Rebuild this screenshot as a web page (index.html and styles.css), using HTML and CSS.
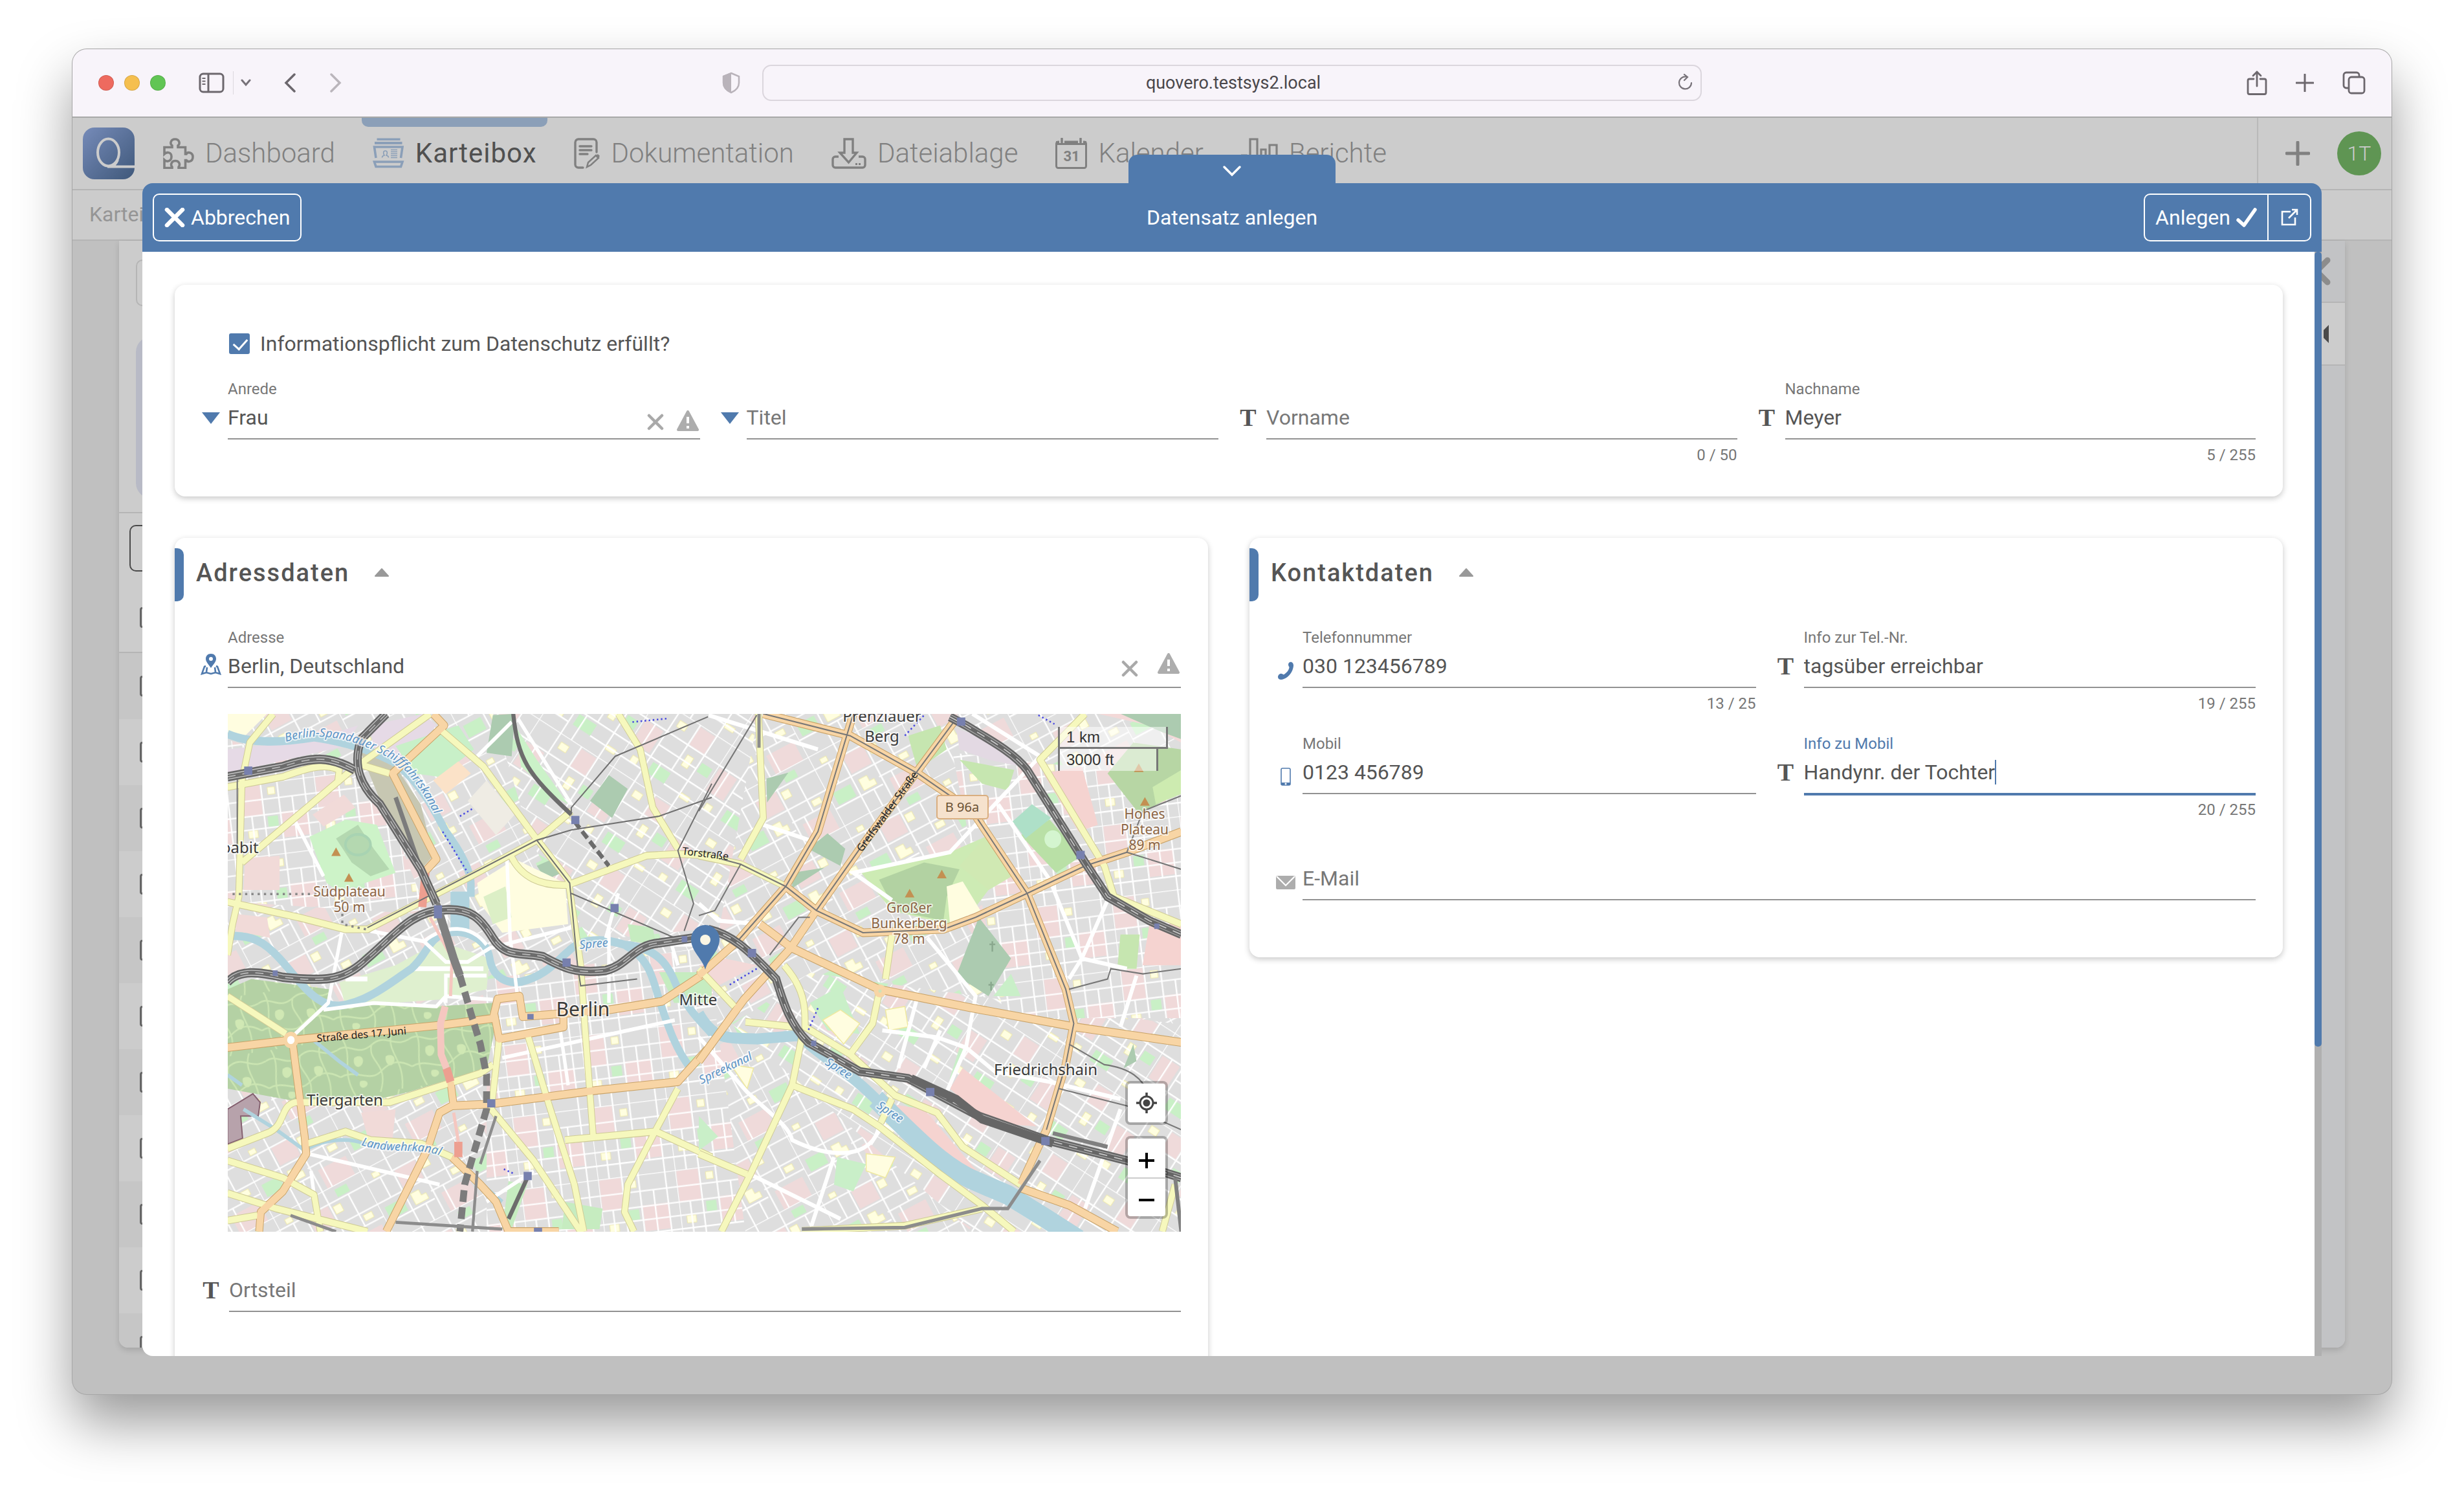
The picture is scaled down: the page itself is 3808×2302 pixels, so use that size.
FILE: index.html
```html
<!DOCTYPE html>
<html lang="de">
<head>
<meta charset="utf-8">
<title>Datensatz anlegen</title>
<link rel="stylesheet" href="styles.css">
</head>
<body>
<div class="window">
  <header class="toolbar">
    <div class="toolbar-side">
      <div class="lights"><span class="light light-red"></span><span class="light light-yellow"></span><span class="light light-green"></span></div>
      <button class="tool tool-sidebar" aria-label="Seitenleiste"><svg width="40" height="32" viewBox="0 0 40 32"><g fill="none" stroke="#6c676d" stroke-width="3"><rect x="2" y="2" width="36" height="28" rx="5"/><path d="M15 2v28"/><path d="M5.500 9h5M5.500 13.500h5M5.500 18h5" stroke-width="2"/></g></svg></button>
      <span class="tool-divider"></span>
      <button class="tool tool-menu" aria-label="Menü"><svg width="16" height="12" viewBox="0 0 16 12"><path d="M2 2l6 7 6-7" fill="none" stroke="#777279" stroke-width="3" stroke-linecap="round"/></svg></button>
      <button class="tool tool-back" aria-label="Zurück"><svg width="20" height="30" viewBox="0 0 20 30"><path d="M17 2L4 15l13 13" fill="none" stroke="#6c676d" stroke-width="3.500" stroke-linecap="round"/></svg></button>
      <button class="tool tool-forward" aria-label="Vor"><svg width="20" height="30" viewBox="0 0 20 30"><path d="M3 2l13 13L3 28" fill="none" stroke="#bab5bb" stroke-width="3.500" stroke-linecap="round"/></svg></button>
    </div>
    <div class="toolbar-center">
      <svg width="28" height="34" viewBox="0 0 28 34"><path d="M14 2l12 5v10c0 7-5 12-12 15C7 29 2 24 2 17V7z" fill="none" stroke="#b9b3ba" stroke-width="2.500"/><path d="M14 1L1 6v11c0 8 6 13 13 16z" fill="#b9b3ba"/></svg>
      <div class="address"><input class="address-input" aria-label="Adresse" value="quovero.testsys2.local"><button class="tool reload" aria-label="Neu laden"><svg width="26" height="28" viewBox="0 0 26 28"><path d="M22 14a9.500 9.500 0 1 1-8-9.500M11 1l5 4-5 5" fill="none" stroke="#777279" stroke-width="2.200" stroke-linecap="round"/></svg></button></div>
    </div>
    <div class="toolbar-side toolbar-end">
      <button class="tool" aria-label="Teilen"><svg width="32" height="40" viewBox="0 0 32 40"><path d="M11 14H4.500a2.500 2.500 0 0 0-2.500 2.500V35a2.500 2.500 0 0 0 2.500 2.500h23A2.500 2.500 0 0 0 30 35V16.500a2.500 2.500 0 0 0-2.500-2.500H21M16 25V3M10 9l6-6 6 6" fill="none" stroke="#6c676d" stroke-width="2.800" stroke-linecap="round" stroke-linejoin="round"/></svg></button>
      <button class="tool" aria-label="Neuer Tab"><svg width="28" height="28" viewBox="0 0 28 28"><path d="M14 1v26M1 14h26" stroke="#6c676d" stroke-width="3" stroke-linecap="round"/></svg></button>
      <button class="tool" aria-label="Tabs"><svg width="36" height="36" viewBox="0 0 36 36"><path d="M9 26H6a4 4 0 0 1-4-4V6a4 4 0 0 1 4-4h16a4 4 0 0 1 4 4v3" fill="none" stroke="#6c676d" stroke-width="2.800"/><rect x="10" y="9" width="24" height="25" rx="4" fill="none" stroke="#6c676d" stroke-width="2.800"/></svg></button>
    </div>
  </header>

  <div class="app">
    <nav class="nav">
      <a class="logo" href="#" aria-label="Start"><svg width="80" height="80" viewBox="0 0 80 80"><defs><linearGradient id="lg" x1="0" y1="0" x2="1" y2="1"><stop offset="0" stop-color="#768bb9"/><stop offset="1" stop-color="#3f587a"/></linearGradient></defs><rect width="80" height="80" rx="18" fill="url(#lg)"/><ellipse cx="39.500" cy="38.500" rx="16.500" ry="21" fill="none" stroke="#ccc" stroke-width="4"/><path d="M38 60.500h42M46 60c3-2 6-5 8-10" fill="none" stroke="#ccc" stroke-width="4"/></svg></a>
      <div class="nav-items">
        <a class="nav-item" href="#"><svg width="48" height="48" viewBox="0 0 48 48"><path d="M2 14.500h12V12C10 9 12 2 18.500 2S27 9 23 12v2.500h11.500V25H36c2-4 10-3 10 4.500S38 38 36 34.500h-1.500V46.500H24V45c3-4 1-9.500-5-9.500s-8 6-5 9.500v1.500H2V34c4 4 11 2 11-5s-7-8-11-4z" fill="none" stroke="#808080" stroke-width="3.600"/></svg><span>Dashboard</span></a>
        <a class="nav-item active" href="#"><svg width="49" height="48" viewBox="0 0 49 48"><path d="M6.500 .5h36v3.500h-36zM3 6h42.500v4H3z" fill="#8b9fb8"/><path d="M5 31L2.500 14h43.500L43.500 31M2.500 37h43.500l-2.500 7.500H5z" fill="none" stroke="#8b9fb8" stroke-width="3.600"/><path d="M14.500 30.500c0-2 1-3 3.500-3.500-2-3-2-7 1.500-7s3.500 4 1.500 7c2.500.5 3.500 1.500 3.500 3.500" fill="none" stroke="#8b9fb8" stroke-width="1.600"/><path d="M28 18.500h10M28 21.500h10M28 24.500h10M28 27.500h10M28 30.500h10" stroke="#8b9fb8" stroke-width="1.500"/></svg><span>Karteibox</span></a>
        <a class="nav-item" href="#"><svg width="40" height="48" viewBox="0 0 40 48"><path d="M14 46H7a5 5 0 0 1-5-5V7a5 5 0 0 1 5-5h23a5 5 0 0 1 5 5v15M9 13h18M9 19h18M9 25h12" fill="none" stroke="#808080" stroke-width="3.400" stroke-linecap="round"/><path d="M20 45l2-7 12-11 4 4-12 11z" fill="none" stroke="#808080" stroke-width="2.500"/><path d="M33 28l4-3 3 3-3 4z" fill="#808080"/></svg><span>Dokumentation</span></a>
        <a class="nav-item" href="#"><svg width="54" height="48" viewBox="0 0 54 48"><path d="M20 2h13v21h6L26.500 38 13 23h7zM11 29H6a4 4 0 0 0-4 4v9a4 4 0 0 0 4 4h42a4 4 0 0 0 4-4v-9a4 4 0 0 0-4-4h-6" fill="none" stroke="#808080" stroke-width="3.400"/><path d="M37 39h3v3h-3zM42 39h3v3h-3z" fill="#808080"/></svg><span>Dateiablage</span></a>
        <a class="nav-item" href="#"><svg width="49" height="48" viewBox="0 0 49 48"><rect x="1.500" y="6" width="46" height="40.500" rx="3" fill="none" stroke="#808080" stroke-width="3"/><path d="M1 5h47v6H1z" fill="#808080"/><path d="M10 0v8M39 0v8" stroke="#ccc" stroke-width="8"/><path d="M10 1v6M39 1v6" stroke="#808080" stroke-width="3.500" stroke-linecap="round"/><text x="25" y="36" text-anchor="middle" class="cal-day">31</text></svg><span>Kalender</span></a>
        <a class="nav-item" href="#"><svg width="57" height="48" viewBox="0 0 57 48"><path d="M0 27h8v19h6V2h11v44h6V18h7v28h6V11h11v35" fill="none" stroke="#808080" stroke-width="3.200"/></svg><span>Berichte</span></a>
      </div>
      <div class="nav-end">
        <button class="tool" aria-label="Neu"><svg width="38" height="38" viewBox="0 0 38 38"><path d="M19 2v34M2 19h34" stroke="#808080" stroke-width="5" stroke-linecap="round"/></svg></button>
        <span class="avatar">1T</span>
      </div>
    </nav>
    <div class="crumbs">Karteibox</div>
    <div class="panel">
      <div class="panel-list">
        <div class="panel-filter"><div class="ghost-input"></div><div class="ghost-card"></div></div>
        <div class="panel-tools"><div class="ghost-button"></div></div>
        <div class="row row-head"><i></i></div>
        <div class="row"><i></i></div><div class="row"><i></i></div><div class="row"><i></i></div><div class="row"><i></i></div><div class="row"><i></i></div><div class="row"><i></i></div><div class="row"><i></i></div><div class="row"><i></i></div><div class="row"><i></i></div><div class="row"><i></i></div><div class="row"><i></i></div>
      </div>
      <div class="panel-aside">
        <div class="aside-close"><svg width="44" height="44" viewBox="0 0 44 44"><path d="M5 5l34 34M39 5L5 39" stroke="#8c8c8c" stroke-width="9" stroke-linecap="round"/></svg></div>
        <div class="aside-tab"><svg width="10" height="28" viewBox="0 0 10 28"><path d="M10 0v28L2 20V8z" fill="#4a4a4a"/></svg></div>
      </div>
    </div>

    <section class="modal" aria-label="Datensatz anlegen">
      <button class="modal-tab" aria-label="Minimieren"><svg width="30" height="18" viewBox="0 0 30 18"><path d="M3 3l12 12L27 3" fill="none" stroke="#fff" stroke-width="3.500" stroke-linecap="round"/></svg></button>
      <header class="modal-head">
        <div class="modal-left"><button class="btn"><svg width="32" height="30" viewBox="0 0 32 30"><path d="M4 3l24 24M28 3L4 27" stroke="#fff" stroke-width="6.500" stroke-linecap="round"/></svg>Abbrechen</button></div>
        <h1 class="modal-title">Datensatz anlegen</h1>
        <div class="modal-right"><div class="btn-group"><button class="btn">Anlegen<svg width="32" height="30" viewBox="0 0 32 30"><path d="M3 19l9 8L29 3" fill="none" stroke="#fff" stroke-width="5.500" stroke-linecap="round" stroke-linejoin="round"/></svg></button><button class="btn btn-open" aria-label="In neuem Fenster"><svg width="28" height="28" viewBox="0 0 28 28"><path d="M16 5H3v20h20V14M18 2h8v8M26 2L13 15" fill="none" stroke="#fff" stroke-width="2.600"/></svg></button></div></div>
      </header>
      <div class="modal-main">
        <form class="form">
          <section class="card card-plain">
            <label class="check"><input type="checkbox" checked>Informationspflicht zum Datenschutz erfüllt?</label>
            <div class="grid four">
              <div class="field">
                <svg class="mark arrow" width="28" height="18" viewBox="0 0 28 18"><path d="M0 0h28L14 18z" fill="#507aad"/></svg>
                <label for="anrede">Anrede</label>
                <div class="control"><select id="anrede"><option>Frau</option><option>Herr</option></select>
                  <button type="button" class="tool clear" aria-label="Leeren"><svg width="26" height="26" viewBox="0 0 26 26"><path d="M3 3l20 20M23 3L3 23" stroke="#a9a9a9" stroke-width="4.500" stroke-linecap="round"/></svg></button>
                  <svg width="34" height="32" viewBox="0 0 34 32"><path d="M17 2l15 28H2z" fill="#adadad" stroke="#adadad" stroke-width="4" stroke-linejoin="round"/><path d="M17 10v10M17 24v4" stroke="#fff" stroke-width="4"/></svg></div>
              </div>
              <div class="field empty">
                <svg class="mark arrow" width="28" height="18" viewBox="0 0 28 18"><path d="M0 0h28L14 18z" fill="#507aad"/></svg>
                <label for="titel">Titel</label>
                <div class="control"><select id="titel"><option></option></select></div>
              </div>
              <div class="field text empty"><span class="mark letter">T</span><label for="vorname">Vorname</label><div class="control"><input id="vorname"></div><span class="count">0 / 50</span></div>
              <div class="field text"><span class="mark letter">T</span><label for="nachname">Nachname</label><div class="control"><input id="nachname" value="Meyer"></div><span class="count">5 / 255</span></div>
            </div>
          </section>

          <div class="columns">
            <section class="card">
              <h2 class="card-head">Adressdaten<svg width="24" height="14" viewBox="0 0 24 14"><path d="M12 1l10 11H2z" fill="#999" stroke="#999" stroke-width="2" stroke-linejoin="round"/></svg></h2>
              <div class="grid">
                <div class="field">
                  <svg class="mark" width="32" height="34" viewBox="0 0 32 34"><path d="M16 1c-5 0-8 3.500-8 8 0 5 5 9 8 14 3-5 8-9 8-14 0-4.500-3-8-8-8zm0 5a3 3 0 1 1 0 6 3 3 0 0 1 0-6z" fill="#507aad" fill-rule="evenodd"/><path d="M8 20l-2 1-4 11 7-2 7 2 7-2 7 2-4-11-2-1M10 22l-1 7M22 22l1 7" fill="none" stroke="#507aad" stroke-width="2.600"/></svg>
                  <label for="adresse">Adresse</label>
                  <div class="control roomy"><input id="adresse" value="Berlin, Deutschland">
                    <button type="button" class="tool clear" aria-label="Leeren"><svg width="26" height="26" viewBox="0 0 26 26"><path d="M3 3l20 20M23 3L3 23" stroke="#a9a9a9" stroke-width="4.500" stroke-linecap="round"/></svg></button>
                    <svg width="34" height="32" viewBox="0 0 34 32"><path d="M17 2l15 28H2z" fill="#adadad" stroke="#adadad" stroke-width="4" stroke-linejoin="round"/><path d="M17 10v10M17 24v4" stroke="#fff" stroke-width="4"/></svg></div>
                </div>
              </div>
              <div class="map">
                <svg class="map-art" viewBox="0 0 1473 800" preserveAspectRatio="xMidYMid slice">
                  <defs>
                    <pattern id="pa" width="190" height="150" patternUnits="userSpaceOnUse" patternTransform="rotate(-28) scale(.8)">
                      <rect width="190" height="150" fill="#dedede"/><path d="M60 30h44v38H60zM120 110h60v40h-60z" fill="#efdada"/><path d="M10 84h38v26H10zM130 8h26v16h-26z" fill="#c9f0c6"/><path d="M66 84h18v12h10v12H66zM112 36h16v16h-16zM18 14h14v10H18zM156 78h18v12h-18z" fill="#fffee0" stroke="#efe9a0"/>
                      <path d="M0 0h190M0 28h190M0 72h190M0 114h104M104 98h86M0 0v150M56 0v150M108 0v150M150 28v70M30 28v44M84 114v36M130 98v52" fill="none" stroke="#fff" stroke-width="3"/></pattern>
                    <pattern id="pb" width="170" height="160" patternUnits="userSpaceOnUse" patternTransform="rotate(33) scale(.8)">
                      <rect width="170" height="160" fill="#dedede"/><path d="M4 50h40v50H4zM100 4h34v40h-34z" fill="#efdada"/><path d="M60 110h40v24H60zM140 60h24v20h-24z" fill="#c9f0c6"/><path d="M60 14h18v14H60zM108 62h14v24h-14zM20 120h14v14H20zM138 130h20v10h-20z" fill="#fffee0" stroke="#efe9a0"/>
                      <path d="M0 0h170M0 46h170M0 104h170M50 76h86M0 134h50M100 134h70M0 0v160M50 0v160M98 0v104M136 0v160M24 46v58M74 104v56" fill="none" stroke="#fff" stroke-width="3"/></pattern>
                    <pattern id="pc" width="150" height="140" patternUnits="userSpaceOnUse" patternTransform="rotate(-7) scale(.8)">
                      <rect width="150" height="140" fill="#dedede"/><path d="M2 2h42v60H2zM80 60h50v50H80z" fill="#f0d9d9"/><path d="M52 66h20v20H52z" fill="#c9f0c6"/><path d="M58 10h14v14H58zM12 90h18v14H12z" fill="#fffee0" stroke="#efe9a0"/>
                      <path d="M0 0h150M0 32h150M0 62h150M0 88h150M0 114h150M0 0v140M46 0v140M78 0v140M104 32v82M130 0v140M22 62v78" fill="none" stroke="#fff" stroke-width="3"/></pattern>
                    <pattern id="wood" width="230" height="170" patternUnits="userSpaceOnUse" patternTransform="rotate(-8)"><rect width="230" height="170" fill="#b4d1a4"/><path d="M0 30C40 10 60 60 110 30S180 50 230 30M20 0C50 60 0 90 40 170M110 30C90 80 160 90 120 170M0 110C50 90 90 140 130 110S200 90 230 110M180 0C150 60 210 80 190 170" fill="none" stroke="#cbe5b2" stroke-width="5"/><path d="M50 60c20-10 34 4 24 20s-34 6-24-20zM150 70c14-8 36 2 24 20s-30 0-24-20zM60 130c20-4 30 10 16 18s-24-6-16-18z" fill="#d0e8b4"/></pattern>
                    <g id="yl"><path d="M170 26L95 110 70 220 60 560 40 640 24 730M24 240L200 210C290 180 340 170 380 190L375 230M670 26L420 190 70 460M24 575L250 620 400 655 470 655 800 500 1010 395 1120 310M700 70L840 180 1000 380 1110 510 1150 760 1165 960 1190 1260M1270 26L1340 130 1380 300 1460 420M1568 440L1460 435 1360 440 1110 525C1020 530 960 500 930 445M450 175L540 200M24 850L210 960M24 1330L200 1380 300 1430 320 1537M24 1425L180 1470 470 1537M24 1295L150 1250C210 1230 190 1170 240 1160L540 1160 830 1075 870 1050M890 975L865 1180 1000 1330 1150 1537M980 960L1050 1170 1130 1400 1160 1537M1100 1270L1390 1245 1568 1320M1460 1120L1390 1240 1300 1400 1290 1480 1320 1537M280 1280L400 1245 480 1270 640 1280 740 1320M24 1505L120 1490"/></g>
                    <g id="yr"><path d="M185 26L200 330 130 450M0 440L130 465 270 530M1200 26L1060 160 1260 470 1290 560 1499 640M600 670L580 800M560 840L540 930 470 1020M265 760C330 830 330 880 330 940L470 1020 610 1140 740 1190 820 1290 1000 1400M145 925L300 940M320 970L290 1110 160 1370 70 1537M290 1110L480 1180 560 1230 750 1370 880 1460 980 1537M600 1150L565 1220M0 1310L150 1370M320 1535L640 1520 880 1470M0 770L110 880M1440 1537L1480 1400"/></g>
                    <g id="ol"><path d="M24 1000L210 980 700 935 870 915 885 858 955 850 965 910 1240 890 1410 865 1568 770M232 990L270 1260 275 1310 200 1420 130 1480 125 1537M680 26L715 60 550 200 690 450 650 490M875 905L890 975 1095 940 1095 905M530 1537L660 1300 700 1190 740 1170 860 1165 1200 1125 1460 1100 1568 990M735 1100L745 1170M740 1320L830 1400 880 1450 920 1537 1080 1537"/></g>
                    <g id="or"><path d="M200 26L470 90 680 200 850 310 1020 550 1140 830 1165 930 1140 1050 1080 1240 1000 1400M480 26L370 370 270 530 120 690 0 790M800 40L500 420 365 600 285 710 140 860 0 1040M270 530L365 600 510 665 760 655 860 620 1020 550 1200 470 1330 430 1499 370M190 640L290 710 560 830 850 885 1170 940 1499 985M1000 1410L1150 1460 1300 1537"/></g>
                    <g id="rl"><path d="M24 810C60 770 130 780 200 795 350 810 400 800 470 740 560 670 610 600 720 598 800 595 830 620 870 680 910 740 960 720 1030 735 1100 770 1140 785 1230 775 1300 760 1320 700 1400 695L1510 680M530 26L450 100C420 180 450 240 510 290L640 480 690 580M24 210L200 180C300 150 350 150 430 190"/></g>
                    <g id="rr"><path d="M780 35L830 60C900 100 980 140 1020 190L1200 460 1270 560 1400 630 1499 670M30 655C100 670 150 710 240 800 260 860 280 930 340 985L500 1070 650 1090 870 1200 1080 1270 1330 1330 1499 1380"/></g>
                    <path id="kanal" d="M90 43C160 20 220 52 262 75 300 112 318 150 336 190"/>
                    <path id="landwehr" d="M206 666C260 684 300 664 345 690"/>
                  </defs>
                  <rect width="1473" height="800" fill="url(#pa)"/>
                  <path d="M410 0H820L760 330 560 350 470 200zM900 400L1473 480V800H1150L780 480z" fill="url(#pb)"/>
                  <path d="M400 410L740 360 800 800H400zM0 40L230 110 310 310 0 290zM1120 60L1473 100V470H1200z" fill="url(#pc)"/>
                  <g transform="matrix(.4847 0 0 .5294 -12 -14)">
                    <path d="M24 26H150L80 90 24 80z" fill="#fffde0"/>
                    <path d="M480 60L650 26 690 60 580 170 490 130zM24 130L300 100 440 60 400 120 24 200z" fill="#e6dae6"/>
                    <path d="M80 450L190 440V540H75zM295 320L395 262 432 300 330 355zM50 610L150 620 160 680 50 660zM450 1190L560 1180 550 1270 470 1260z" fill="#f1dad8"/>
                    <path d="M285 385L400 335 500 350 560 490 380 545 340 520z" fill="#cdf3c8"/><path d="M370 390L440 350 490 420 540 480 480 500 420 460z" fill="#b4d8b0"/><ellipse cx="440" cy="408" rx="40" ry="30" fill="none" stroke="#a8d3b2" stroke-width="8"/>
                    <path d="M560 120L760 60 810 130 700 210 620 200z" fill="#c8f0c8"/><path d="M680 220L760 165 800 200 720 260z" fill="#fbe2c8"/><path d="M790 280L850 220 940 320 880 380z" fill="#efece4"/>
                    <path d="M870 30L940 26 930 150 850 140zM1180 280L1240 205 1300 245 1250 330z M1010 470l50-20 30 40-50 20z" fill="#accbb0"/><path d="M940 60L1010 160 1110 290 1070 270 960 180z" fill="#cbf2c8"/>
                    <path d="M820 520L940 450 1100 520 1110 640 900 665 830 580z" fill="#fffde0"/><path d="M840 560l70-30 20 90-60 20z" fill="#dcefc6"/>
                    <path d="M440 120L560 180 640 290 680 440 640 480 520 300z" fill="#c7c7b2"/>
                    <path d="M24 830L100 800 350 830 340 890 490 870 690 880 870 870 885 910 850 1060 600 1130 440 1165 260 1160 24 1120z" fill="url(#wood)"/>
                    <path d="M380 810L560 760 700 690 860 740 850 830 700 860 400 880z" fill="#dff0cf"/>
                    <path d="M600 770H840M400 800H470" stroke="#fff" stroke-width="14"/>
                    <path d="M60 1160L105 1135 128 1160 122 1200 66 1200 72 1265 24 1282V1180z" fill="#b7a2ab" stroke="#84606f" stroke-width="4"/>
                    <path d="M1300 640l80 10 10 50-80-10zM1400 780h168v90h-120zM1100 1450l120 20-10 60h-120zM920 1390l60 10-50 130h-30z" fill="#c6ecc0"/>
                    <g fill="none" stroke="#b0d3de" stroke-width="24"><path d="M24 675C100 670 140 690 190 740 250 800 300 880 380 878 470 870 560 800 610 770 660 730 660 690 710 668 780 650 850 680 860 740 870 800 920 815 960 808 1040 790 1070 750 1110 720 1150 680 1220 680 1290 700 1370 740 1380 800 1400 860 1430 940 1450 1000 1500 1060M1290 700C1400 710 1430 760 1460 830 1500 900 1540 930 1568 960"/><path d="M24 85C100 115 200 110 300 95 420 110 500 140 560 170 640 230 680 300 720 370 770 430 800 490 800 520V560" /><path d="M765 545V660" stroke-width="60"/><path d="M75 1180L180 1240 270 1300C320 1270 400 1260 460 1280 560 1300 700 1290 760 1340L900 1450M24 1080L70 1110M300 980L380 1040 440 1080" stroke-width="11"/></g>
                    <g fill="none" stroke="#fff" stroke-width="11"><path d="M390 655L345 870 240 960M330 890L490 870 690 880 720 850 870 860M480 660L650 690 720 750 790 750 860 710 1120 650M650 690C720 640 800 640 850 700M915 450L925 680 950 860M240 340L330 500M930 50L820 150M950 40L1120 290M720 640V590M1568 700L1440 700 1460 760M720 870V790H850M280 1310L700 1400M290 1360L310 1500M850 1450L1000 1360M1085 950L1110 1110M900 1030L1450 920M1240 640L1240 870M1270 550L1230 680"/></g>
                    <g fill="none" stroke-linejoin="round"><use href="#yl" stroke="#cfcb96" stroke-width="22"/><use href="#ol" stroke="#c9a368" stroke-width="25"/><use href="#yl" stroke="#f6f8bd" stroke-width="18"/><use href="#ol" stroke="#f8d5a5" stroke-width="21"/></g>
                    <circle cx="226" cy="978" r="18" fill="#fff" stroke="#f8d5a5" stroke-width="12"/>
                    <path d="M655 490L645 590M722 1060L735 1100M760 1275V1320" stroke="#ed9f90" stroke-width="26"/><path d="M718 880L703 930 705 1020 722 1060" fill="none" stroke="#f5c7c0" stroke-width="22"/><path d="M670 620L740 740 735 850M745 1190L760 1275" fill="none" stroke="#f5c7c0" stroke-width="10"/>
                    <g fill="none" stroke="#707070" stroke-width="4"><path d="M470 650L1010 395 1120 365 1400 325 1568 270M1120 320V300L1260 150 1568 30M1010 395L1115 520 1140 760 1150 820 1330 800M1120 550L1450 680M1568 230L1460 425 1510 580 1480 660M55 420V200"/></g>
                    <g fill="none"><path d="M560 270L640 480 700 590" stroke="#7c7c7c" stroke-width="14"/><use href="#rl" stroke="#666" stroke-width="27"/><use href="#rl" stroke="#c4c4c4" stroke-width="17"/><use href="#rl" stroke="#6c6c6c" stroke-width="12"/><use href="#rl" stroke="#bbb" stroke-width="3" stroke-dasharray="26 22"/>
                    <path d="M935 26C950 160 980 200 1120 320M920 1500L980 1380" stroke="#6c6c6c" stroke-width="13"/><path d="M1130 340L1240 470" stroke="#6c6c6c" stroke-width="13" stroke-dasharray="26 12"/><path d="M700 610L745 740 765 790" stroke="#808080" stroke-width="26"/><path d="M765 790L800 900 830 990 850 1080 850 1180 780 1400 765 1537" stroke="#7c7c7c" stroke-width="22" stroke-dasharray="34 16"/><path d="M820 1360L805 1537M560 1510L900 1530M225 1490L370 1537M880 1200L830 1340" stroke="#8c8c8c" stroke-width="9"/></g>
                    <path d="M77 180h26v24H77zM1120 324h26v24h-26zM682 585h26v38h-26zM168 775h16v16h-16zM1092 740h26v24h-26zM1245 581h26v24h-26zM980 902h20v16h-20zM852 1151h26v24h-26zM968 1363h26v24h-26zM1001 1526h26v12h-26zM1472 675h18v18h-18z" fill="#7780ae"/>
                    <path d="M710 370L790 490M765 325l40-22M1315 50l110-10M905 1355l34 14" stroke="#4a4ae0" stroke-width="5" stroke-dasharray="5 8"/>
                    <path d="M40 552H300L390 560V640L470 656" fill="none" stroke="#888" stroke-width="7" stroke-dasharray="7 13"/>
                    <path d="M355 441l15-25 15 25zM396 516l15-25 15 25z" fill="#c39052"/>
                  </g>
                  <g transform="matrix(.4974 0 0 .5294 728 -14)">
                    <path d="M1240 26H1499V110L1400 60zM0 760L80 740 180 760 60 820z" fill="#f3d9d8"/><path d="M1310 26H1499V100L1440 80z" fill="#accbb0"/>
                    <path d="M1350 110L1499 130V250L1370 320 1270 200z" fill="#b7d6a4"/><path d="M1410 240L1499 190V260L1420 290z" fill="#cdebb0"/>
                    <path d="M1000 380L1090 335 1190 440 1110 490z" fill="#b9e0a6"/><circle cx="1100" cy="392" r="26" fill="#d4f5cf"/><path d="M975 340l60-50 60 40-80 60z" fill="#aee0c8"/>
                    <path d="M1070 200l120-20 50 170-60 20zM1400 640h99v120h-120zM820 1060L1050 1230 900 1220 780 1120zM560 1160L700 1180 900 1400 700 1330z" fill="#f5d3d0"/>
                    <path d="M650 90L750 60 770 130 680 190zM810 160L980 190 960 250 880 230zM1310 670h60l-10 100h-60z" fill="#c6e6b0"/><path d="M800 70L940 110 1000 180 900 160 810 130z" fill="#e3d9e3"/>
                    <path d="M505 490L780 430 890 385 990 490 900 540 860 590 770 640 600 600z" fill="#cdebb4"/><path d="M560 510L700 460 810 480 770 560 760 630 610 600z" fill="#b2d2a2"/><path d="M890 385L990 490 900 540 810 470z" fill="#d0e9b3"/><path d="M770 530L820 515 875 600 780 635z" fill="#fffde0"/>
                    <path d="M870 620L970 740 900 850 800 790zM340 420L400 375 455 420 440 470zM210 215L278 198 212 285zM290 490l100-15-100 60zM1350 990l10 50-40 20z" fill="#accbb0"/>
                    <path d="M970 785L1000 850H915zM345 870L440 820 500 960 400 950zM0 1200L60 1260 0 1300zM430 1320L520 1340 480 1420 420 1400zM780 1090L810 1000 830 1010 780 1120z" fill="#c9efc8"/>
                    <path d="M385 920L440 890 500 930 450 990zM580 890L640 880 650 940 590 950zM520 1310l90 10-30 60-60-20zM100 1050l70 10-20 60z" fill="#fffde0" stroke="#efe9a0" stroke-width="3"/>
                    <path d="M0 900C50 985 100 970 180 975L310 965C400 1040 480 1080 560 1160" fill="none" stroke="#b0d3de" stroke-width="32"/><path d="M550 1150C680 1270 760 1350 860 1390L960 1430 1080 1500 1180 1560" fill="none" stroke="#b0d3de" stroke-width="58"/>
                    <g fill="none" stroke="#fff" stroke-width="12"><path d="M850 26L1060 150 920 290 780 430 480 490 600 570M710 680L860 850 830 1000 770 1130M930 290L1090 510 1190 740 1330 770M1270 570L1190 740 1150 800M0 970L150 1130C230 1200 280 1230 290 1270 420 1330 540 1320 560 1230M30 30L370 130M680 850L620 1060M570 950L740 970 830 1000 920 1070 1090 1100 1310 1150M1310 1180L1200 1470M1360 790L1310 940M160 1370L440 1500M420 1320L350 1520M0 580L60 630 190 640M750 950L700 1060M200 350L360 400"/></g>
                    <g fill="none" stroke-linejoin="round"><use href="#yr" stroke="#cfcb96" stroke-width="22"/><use href="#or" stroke="#c9a368" stroke-width="25"/><use href="#yr" stroke="#f6f8bd" stroke-width="18"/><use href="#or" stroke="#f8d5a5" stroke-width="21"/></g>
                    <circle cx="563" cy="835" r="12" fill="#cfe2b8" stroke="#f8d5a5" stroke-width="14"/>
                    <g fill="none" stroke="#777" stroke-width="4"><path d="M200 26L470 90 680 200 850 310 1020 550 1140 830 1165 930 1140 1050 1080 1240M480 26L370 370 270 530 120 690M800 40L500 420 365 600M270 530L365 600 510 665 760 655 860 620 1020 550 1200 470 1330 430M130 465L270 530M180 30L0 310M0 615L50 600 130 465 70 450M220 730L310 620H345M1150 830L1270 800 1280 770 1380 785 1499 770M1150 990L1260 1050C1340 1060 1380 1090 1400 1140M1120 1120L1330 1170 1499 1240M1330 430L1499 480M1330 430L1380 310 1499 265"/><path d="M187 26V125M320 1530L640 1525 880 1470 960 1470 1060 1330" stroke="#8c8c8c" stroke-width="10"/></g>
                    <g fill="none"><use href="#rr" stroke="#666" stroke-width="26"/><use href="#rr" stroke="#b4b4b4" stroke-width="16"/><use href="#rr" stroke="#666" stroke-width="12"/><use href="#rr" stroke="#ccc" stroke-width="3" stroke-dasharray="26 22"/><path d="M660 1090L800 1150 880 1210 1100 1280" stroke="#666" stroke-width="24"/><path d="M1480 1380L1499 1537M1100 1250L1270 1290" stroke="#808080" stroke-width="12"/></g>
                    <path d="M802 37h26v24h-26zM1173 426h26v24h-26zM1415 638h16v16h-16zM152 712h26v24h-26zM349 980h16v16h-16zM706 1118h26v24h-26zM1064 1261h26v24h-26z" fill="#7780ae"/>
                    <path d="M740 506l15-25 15 25zM640 562l15-25 15 25zM1371 294l15-25 15 25zM1352 196l15-25 15 25z" fill="#c39052"/>
                    <path d="M912 690v30M903 699h18M908 808v26M900 817h16" stroke="#8aa88e" stroke-width="5"/>
                    <path d="M370 885L340 950M180 770L90 820M640 90L700 30M1055 30l50 26" stroke="#4a4ae0" stroke-width="5" stroke-dasharray="5 8"/>
                  </g>
                  <g class="map-labels">
                    <text x="549" y="467" class="big" text-anchor="middle">Berlin</text>
                    <text x="727" y="450" text-anchor="middle">Mitte</text>
                    <text x="181" y="605" text-anchor="middle">Tiergarten</text>
                    <text x="1264" y="558" text-anchor="middle">Friedrichshain</text>
                    <text x="1011" y="12" text-anchor="middle">Prenzlauer</text><text x="1011" y="43" text-anchor="middle">Berg</text>
                    <text x="-10" y="215">oabit</text>
                    <g class="peak" text-anchor="middle"><text x="188" y="282">Südplateau</text><text x="188" y="306">50 m</text><text x="1053" y="307">Großer</text><text x="1053" y="331">Bunkerberg</text><text x="1053" y="355">78 m</text><text x="1417" y="162">Hohes</text><text x="1417" y="186">Plateau</text><text x="1417" y="210">89 m</text></g>
                    <g class="street"><text x="138" y="507" transform="rotate(-5 138 507)">Straße des 17. Juni</text><text x="980" y="214" transform="rotate(-54 980 214)">Greifswalder Straße</text><text x="702" y="217" transform="rotate(7 702 217)">Torstraße</text></g>
                    <g class="river"><text><textPath href="#kanal">Berlin-Spandauer Schifffahrtskanal</textPath></text><text><textPath href="#landwehr">Landwehrkanal</textPath></text><text x="544" y="363" transform="rotate(-5 544 363)">Spree</text><text x="732" y="572" transform="rotate(-26 732 572)">Spreekanal</text><text x="922" y="541" transform="rotate(32 922 541)">Spree</text><text x="1002" y="608" transform="rotate(33 1002 608)">Spree</text></g>
                    <rect x="1096" y="126" width="79" height="36" rx="4" fill="#f6e2cd" stroke="#d9ae7f" stroke-width="2"/><text x="1135" y="151" class="shield" text-anchor="middle">B 96a</text>
                  </g>
                  <path d="M738 395c-5-18-22-28-22-47a22 22 0 0 1 44 0c0 19-17 29-22 47z" fill="#507aad"/><circle cx="738" cy="349" r="8" fill="#fbf6e4"/>
                </svg>
                <div class="map-scale"><span class="scale-km">1 km</span><span class="scale-ft">3000 ft</span></div>
                <div class="map-controls">
                  <div class="map-bar"><button type="button" aria-label="Standort"><svg width="32" height="32" viewBox="0 0 32 32"><circle cx="16" cy="16" r="10" fill="none" stroke="#444" stroke-width="3"/><circle cx="16" cy="16" r="5.500" fill="#444"/><path d="M16 0v7M16 25v7M0 16h7M25 16h7" stroke="#444" stroke-width="3.500"/></svg></button></div>
                  <div class="map-bar map-zoom"><button type="button" aria-label="Vergrößern"><svg width="26" height="26" viewBox="0 0 26 26"><path d="M13 1v24M1 13h24" stroke="#000" stroke-width="4"/></svg></button><button type="button" aria-label="Verkleinern"><svg width="26" height="26" viewBox="0 0 26 26"><path d="M1 13h24" stroke="#000" stroke-width="4"/></svg></button></div>
                </div>
              </div>
              <div class="grid">
                <div class="field text empty"><span class="mark letter">T</span><label for="ortsteil">Ortsteil</label><div class="control"><input id="ortsteil"></div></div>
              </div>
            </section>

            <section class="card">
              <h2 class="card-head">Kontaktdaten<svg width="24" height="14" viewBox="0 0 24 14"><path d="M12 1l10 11H2z" fill="#999" stroke="#999" stroke-width="2" stroke-linejoin="round"/></svg></h2>
              <div class="grid two">
                <div class="field"><svg class="mark low" width="26" height="29" viewBox="0 0 26 29"><path d="M19.500 1c3-1.500 6 2 5.500 6-1 9-7 17-15 20-4 2-9 1-9-3 0-3 3-6 6-5 2 .5 2 1.500 3.500 1C15 17 18 13 18.500 9c0-1-1.500-2-1.500-4s1-3.500 2.500-4z" fill="#507aad"/></svg><label for="tel">Telefonnummer</label><div class="control"><input id="tel" value="030 123456789"></div><span class="count">13 / 25</span></div>
                <div class="field text"><span class="mark letter">T</span><label for="telinfo">Info zur Tel.-Nr.</label><div class="control"><input id="telinfo" value="tagsüber erreichbar"></div><span class="count">19 / 255</span></div>
                <div class="field"><svg class="mark low" width="16" height="28" viewBox="0 0 16 28"><rect x="1" y="1" width="14" height="26" rx="2" fill="#fff" stroke="#507aad" stroke-width="1.600"/><path d="M1 23h14v4H1z" fill="#507aad"/><circle cx="8" cy="25" r="1.500" fill="#fff"/></svg><label for="mobil">Mobil</label><div class="control"><input id="mobil" value="0123 456789"></div></div>
                <div class="field text focused"><span class="mark letter">T</span><label for="mobilinfo">Info zu Mobil</label><div class="control"><span class="typed"><input id="mobilinfo" value="Handynr. der Tochter"></span></div><span class="count">20 / 255</span></div>
                <div class="field empty wide"><svg class="mark low" width="30" height="22" viewBox="0 0 30 22"><rect width="30" height="21" rx="2" fill="#adadad"/><path d="M1 1l14 14L29 1" fill="none" stroke="#fff" stroke-width="2.200"/></svg><label for="mail">E-Mail</label><div class="control"><input id="mail" type="email"></div></div>
              </div>
            </section>
          </div>
        </form>
        <div class="scroll"><div class="scroll-thumb"></div></div>
      </div>
    </section>
  </div>
</div>
</body>
</html>
```

FILE: styles.css
```css
* { box-sizing: border-box; }
html, body { height: 100%; }
body {
  margin: 0;
  padding: 76px 112px 148px;
  background: #fff;
  color: #555;
  font: 32px/40px Roboto, "Liberation Sans", sans-serif;
  overflow: hidden;
}
button, input, select { font: inherit; color: inherit; margin: 0; padding: 0; border: 0; background: none; border-radius: 0; }
input, select { outline: none; appearance: none; min-width: 0; }
svg { display: block; flex: none; }
a { color: inherit; text-decoration: none; }

.window {
  display: flex;
  flex-direction: column;
  height: 100%;
  border-radius: 22px;
  overflow: hidden;
  background: #c0c0c0;
  box-shadow: 0 0 0 1px #a6a6a6, 0 44px 84px rgba(0, 0, 0, .4);
}

/* Browser toolbar */
.toolbar {
  display: flex;
  align-items: center;
  height: 106px;
  flex: none;
  padding: 0 40px;
  background: #f8f4fa;
  border-bottom: 2px solid #a8a8a8;
}
.toolbar-side { display: flex; flex: 1; align-items: center; }
.toolbar-end { justify-content: flex-end; gap: 44px; }
.lights { display: flex; gap: 16px; margin-right: 51px; }
.light { width: 24px; height: 24px; border-radius: 50%; border: 1px solid rgba(0, 0, 0, .12); }
.light-red { background: #ee6a5f; }
.light-yellow { background: #f5bf4f; }
.light-green { background: #61c554; }
.tool { display: flex; align-items: center; justify-content: center; flex: none; }
.tool-divider { width: 1px; height: 36px; margin: 0 11px 0 13px; background: #dcd8de; }
.tool-back { margin-left: 50px; }
.tool-forward { margin-left: 51px; }
.toolbar-center { display: flex; align-items: center; gap: 34px; flex: none; width: 45%; padding-right: 62px; }
.address {
  display: flex;
  align-items: center;
  flex: 1;
  height: 56px;
  padding: 0 10px 0 40px;
  border: 2px solid #dbd6dd;
  border-radius: 14px;
}
.address-input { flex: 1; text-align: center; font-size: 27px; color: #4a474b; }

/* Dimmed application behind the dialog */
.app { position: relative; flex: 1; display: flex; flex-direction: column; min-height: 0; }
.nav { display: flex; align-items: center; height: 112px; flex: none; padding-left: 16px; background: #ccc; border-bottom: 2px solid #b5b5b5; }
.nav-items { display: flex; align-items: stretch; gap: 58px; flex: 1; height: 100%; padding-left: 44px; }
.nav-item { position: relative; display: flex; align-items: center; gap: 17px; font-size: 42px; line-height: 48px; font-weight: 300; color: #808080; }
.nav-item.active { color: #505050; font-weight: 400; letter-spacing: 1px; }
.nav-item.active::before { content: ""; position: absolute; top: 0; left: -17px; right: -17px; height: 14px; border-radius: 0 0 10px 10px; background: #8b9fb8; }
.cal-day { font: 700 22px Roboto, sans-serif; fill: #808080; }
.nav-end { display: flex; align-items: center; gap: 42px; height: 100%; padding: 0 16px 0 42px; border-left: 2px solid #b9b9b9; }
.avatar { width: 68px; height: 68px; border-radius: 50%; background: #5f9553; color: #ccc; text-align: center; line-height: 68px; font-weight: 300; }
.crumbs { height: 78px; flex: none; padding: 17px 26px; background: #ccc; border-bottom: 2px solid #b5b5b5; color: #959595; }
.panel { display: flex; flex: 1; min-height: 0; margin: 0 72px 72px; border-radius: 0 0 14px 14px; background: #ccc; box-shadow: 0 4px 10px rgba(0, 0, 0, .14); overflow: hidden; }
.panel-list { flex: 1; }
.panel-filter { height: 421px; padding: 29px 26px 0; border-bottom: 2px solid #b5b5b5; }
.ghost-input { height: 72px; border: 2px solid #b5b5b5; border-radius: 10px; }
.ghost-card { height: 250px; margin-top: 47px; border-radius: 24px; background: #b8bac6; }
.panel-tools { padding: 18px 16px; }
.ghost-button { height: 72px; border: 2px solid #4a4a4a; border-radius: 10px; }
.row { display: flex; align-items: center; height: 102px; padding-left: 32px; }
.row:nth-child(even) { background: #c6c6c6; }
.row-head { height: 108px; border-bottom: 2px solid #b5b5b5; background: none; }
.row i { width: 32px; height: 32px; border: 3px solid #666; border-radius: 4px; }
.panel-aside { width: 140px; background: #c2c3c5; }
.aside-close { display: flex; align-items: center; justify-content: flex-end; height: 96px; padding-right: 22px; border-bottom: 2px solid #b5b5b5; }
.aside-tab { display: flex; align-items: center; justify-content: flex-end; height: 97px; padding-right: 25px; background: #ccc; border-bottom: 2px solid #b5b5b5; }

/* Dialog */
.modal { position: absolute; inset: 101px 108px 59px; display: flex; flex-direction: column; }
.modal-tab {
  position: absolute;
  left: 50%;
  bottom: 100%;
  width: 320px;
  height: 44px;
  margin-left: -160px;
  display: flex;
  align-items: center;
  justify-content: center;
  padding-top: 6px;
  background: #507aad;
  border-radius: 14px 14px 0 0;
}
.modal-head { display: flex; align-items: center; flex: none; height: 106px; padding: 0 16px; background: #507aad; border-radius: 16px 16px 0 0; color: #fff; }
.modal-left, .modal-right { flex: 1; display: flex; }
.modal-right { justify-content: flex-end; }
.modal-title { margin: 0; font-size: 32px; line-height: 40px; font-weight: 400; }
.btn { display: flex; align-items: center; gap: 9px; height: 74px; padding: 0 16px; border: 2px solid #fff; border-radius: 10px; }
.btn-group { display: flex; }
.btn-group .btn:first-child { border-right-width: 0; border-radius: 10px 0 0 10px; }
.btn-group .btn-open { border-radius: 0 10px 10px 0; padding: 0 18px; }
.modal-main { display: flex; flex: 1; min-height: 0; background: #fff; border-radius: 0 0 0 16px; overflow: hidden; }
.form { flex: 1; padding: 51px 49px 0 50px; overflow: hidden; }
.scroll { width: 11px; background: #b0b0b0; }
.scroll-thumb { height: 72%; border-radius: 5px; background: #507aad; }

.card { padding: 16px 42px 48px 40px; border-radius: 16px; background: #fff; box-shadow: 0 3px 10px rgba(0, 0, 0, .22); }
.card-plain { padding-top: 71px; }
.columns { display: grid; grid-template-columns: 1fr 1fr; gap: 64px; align-items: start; margin-top: 64px; }
.card-head {
  position: relative;
  display: flex;
  align-items: center;
  gap: 38px;
  height: 82px;
  margin: 0 0 40px -40px;
  padding: 0 0 6px 33px;
  font-size: 38px;
  line-height: 48px;
  font-weight: 500;
  letter-spacing: 2px;
}
.card-head::before { content: ""; position: absolute; inset: 0 auto 0 0; width: 14px; border-radius: 0 10px 10px 0; background: #507aad; }
.check { display: flex; align-items: center; gap: 16px; margin: 0 0 34px 44px; }
.check input { position: relative; width: 32px; height: 32px; border-radius: 3px; background: #507aad; }
.check input:checked::after { content: ""; position: absolute; left: 11px; top: 4px; width: 10px; height: 18px; border: solid #fff; border-width: 0 3px 3px 0; transform: rotate(42deg); }

.grid { display: grid; gap: 30px; }
.four { grid-template-columns: repeat(4, 1fr); }
.two { grid-template-columns: repeat(2, 1fr); }
.wide { grid-column: 1 / -1; }
.field { display: grid; grid-template-columns: 32px minmax(0, 1fr); column-gap: 10px; grid-template-rows: 40px 54px 40px; }
.field.text { column-gap: 12px; }
.field label { grid-area: 1 / 2; font-size: 24px; line-height: 32px; color: #777; }
.field.empty label { grid-area: 2 / 2; font-size: 32px; line-height: 40px; }
.mark { grid-area: 2 / 1; justify-self: center; align-self: start; }
.letter { font: 700 38px/40px "Liberation Serif", serif; }
.arrow { margin-top: 12px; }
.low { align-self: center; }
.control { grid-area: 2 / 2; display: flex; gap: 20px; padding-right: 2px; border-bottom: 2px solid #929292; }
.control.roomy { gap: 30px; }
.control input, .control select { flex: 1; height: 40px; line-height: 40px; }
.control > svg { margin-top: 9px; }
.control.roomy > svg { margin-top: 0; }
.clear { height: 54px; }
.roomy .clear { height: 48px; }
.count { grid-area: 3 / 2; padding-top: 8px; font-size: 24px; line-height: 32px; text-align: right; color: #777; }
.focused label { color: #507aad; }
.focused .control { height: 56px; border-bottom: 4px solid #507aad; }
.typed { position: relative; display: flex; height: 40px; }
.typed input { field-sizing: content; flex: none; }
.typed::after { content: ""; position: absolute; right: -2px; top: 1px; width: 2px; height: 38px; background: #507aad; }

/* Map */
.map { position: relative; height: 800px; margin: 0 0 30px 42px; overflow: hidden; }
.map-art { width: 100%; height: 100%; }
.map-labels { font: 24px "Noto Sans", sans-serif; fill: #3a3a3a; }
.map-labels text { paint-order: stroke; stroke: rgba(255, 255, 255, .7); stroke-width: 4px; stroke-linejoin: round; }
.map-labels .big { font-size: 30px; }
.map-labels .peak { font-size: 21px; fill: #8d6544; }
.map-labels .street { font-size: 16px; fill: #222; }
.map-labels .street text { stroke: none; }
.map-labels .river { font-size: 18px; font-style: italic; fill: #5c94c6; }
.map-labels .shield { font-size: 20px; fill: #6b5134; stroke: none; }
.map-scale { position: absolute; top: 20px; right: 20px; width: 170px; font: 24px/32px "Liberation Sans", sans-serif; color: #333; }
.map-scale span { display: block; height: 34px; padding-left: 10px; background: rgba(255, 255, 255, .5); border: 3px solid #777; border-top: 0; }
.map-scale .scale-ft { width: 155px; border-bottom: 0; line-height: 34px; }
.map-controls { position: absolute; right: 20px; bottom: 20px; display: grid; gap: 17px; }
.map-bar { display: grid; width: 66px; border: 4px solid rgba(0, 0, 0, .25); border-radius: 8px; background: #fff; background-clip: padding-box; }
.map-bar button { display: flex; align-items: center; justify-content: center; height: 60px; }
.map-zoom button { padding-top: 8px; }
.map-bar button + button { border-top: 2px solid #ccc; }
```
